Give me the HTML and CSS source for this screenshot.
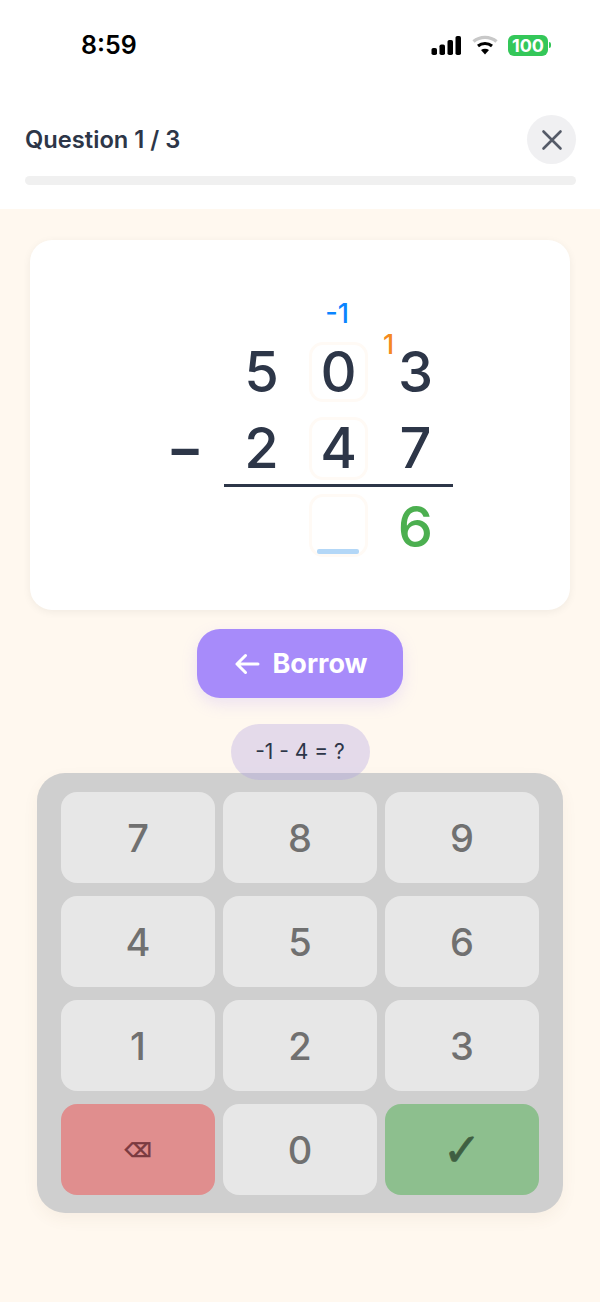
FILE: index.html
```html
<!DOCTYPE html>
<html lang="en">
  <head>
    <meta charset="UTF-8" />
    <meta name="viewport" content="width=device-width, initial-scale=1.0" />
    <title>Question 1 / 3</title>
    <link rel="stylesheet" href="styles.css">
  </head>
  <body>
    <header class="top">
      <div class="status-bar">
        <span class="clock">8:59</span>
        <div class="status-icons">
          <svg class="signal" width="31" height="20" viewBox="0 0 31 20">
            <rect x="0.5" y="13" width="5.5" height="7" rx="1.8" />
            <rect x="8.5" y="9.5" width="5.5" height="10.5" rx="1.8" />
            <rect x="16.5" y="5" width="5.5" height="15" rx="1.8" />
            <rect x="24.5" y="1" width="5.5" height="19" rx="1.8" />
          </svg>
          <svg class="wifi" width="26" height="20" viewBox="0 0 26 20">
            <path d="M1.5 6.5 C8 1 18 1 24.5 6.5" stroke="#c8c8c8" stroke-width="3.4" fill="none" />
            <path d="M6 11 C10 7.6 16 7.6 20 11" stroke="#000" stroke-width="3" fill="none" />
            <path d="M9 15 L13 19.5 L17 15 C14.6 13.2 11.4 13.2 9 15 Z" fill="#000" />
          </svg>
          <div class="battery">
            <span class="battery-body">100</span>
            <span class="battery-tip"></span>
          </div>
        </div>
      </div>
      <div class="question-row">
        <h1 class="question-title">Question 1 / 3</h1>
        <button class="close-btn">
          <svg width="22" height="22" viewBox="0 0 22 22">
            <path d="M2.5 2.5 L19.5 19.5 M19.5 2.5 L2.5 19.5" stroke="#555b68" stroke-width="2.6" stroke-linecap="round" />
          </svg>
        </button>
      </div>
      <div class="progress"></div>
    </header>

    <main class="content">
      <section class="sum-card">
        <div class="sum">
          <div class="sum-row">
            <span class="cell"></span>
            <span class="cell">5</span>
            <span class="cell boxed">0<span class="note-borrow">-1</span></span>
            <span class="cell">3<span class="note-carry">1</span></span>
          </div>
          <div class="sum-row">
            <span class="cell minus">−</span>
            <span class="cell">2</span>
            <span class="cell boxed">4</span>
            <span class="cell">7</span>
          </div>
          <div class="sum-line"></div>
          <div class="sum-row">
            <span class="cell"></span>
            <span class="cell"></span>
            <span class="cell boxed"><span class="cursor"></span></span>
            <span class="cell done">6</span>
          </div>
        </div>
      </section>

      <button class="borrow-btn">
        <svg width="26" height="22" viewBox="0 0 26 22">
          <path d="M24 11 H3 M11.5 2.5 L3 11 L11.5 19.5" stroke="#fff" stroke-width="3" fill="none" stroke-linecap="round" stroke-linejoin="round" />
        </svg>
        Borrow
      </button>

      <div class="hint">-1 - 4 = ?</div>

      <section class="keypad">
        <button class="key">7</button>
        <button class="key">8</button>
        <button class="key">9</button>
        <button class="key">4</button>
        <button class="key">5</button>
        <button class="key">6</button>
        <button class="key">1</button>
        <button class="key">2</button>
        <button class="key">3</button>
        <button class="key key-delete">⌫</button>
        <button class="key">0</button>
        <button class="key key-ok">✓</button>
      </section>
    </main>
  </body>
</html>
```

FILE: styles.css
```css
* {
  box-sizing: border-box;
}
body {
  margin: 0;
  width: 600px;
  height: 1302px;
  overflow: hidden;
  font-family: Inter, "Liberation Sans", sans-serif;
  background-color: #fff8ef;
  color: #2d3648;
}
button {
  font-family: inherit;
  border: none;
  padding: 0;
}

/* top part */
.top {
  height: 209px;
  padding: 0 24px 0 25px;
  background: white;
}
.status-bar {
  height: 90px;
  display: flex;
  justify-content: space-between;
  align-items: center;
  padding-left: 56px;
}
.clock {
  font-size: 25px;
  font-weight: 600;
  color: black;
}
.status-icons {
  display: flex;
  align-items: center;
  gap: 10px;
  margin-right: 25px;
}
.signal {
  fill: black;
}
.battery {
  display: flex;
  align-items: center;
  gap: 1px;
}
.battery-body {
  width: 40px;
  height: 21px;
  border-radius: 6px;
  background-color: #34c759;
  color: white;
  font-size: 18px;
  font-weight: 700;
  line-height: 21px;
  text-align: center;
}
.battery-tip {
  width: 2px;
  height: 6px;
  border-radius: 0 2px 2px 0;
  background-color: #34c759;
}
.question-row {
  display: flex;
  justify-content: space-between;
  align-items: center;
  height: 49px;
  margin-top: 25px;
}
.question-title {
  margin: 0;
  font-size: 23.7px;
  font-weight: 600;
}
.close-btn {
  width: 49px;
  height: 49px;
  border-radius: 50%;
  background-color: #f0f0f2;
  display: flex;
  align-items: center;
  justify-content: center;
}
.progress {
  height: 9px;
  margin-top: 12px;
  border-radius: 5px;
  background-color: #f0f0f0;
}

/* main part */
.content {
  display: flex;
  flex-direction: column;
  align-items: center;
  padding-top: 31px;
}
.sum-card {
  width: 540px;
  height: 370px;
  border-radius: 22px;
  background: white;
  box-shadow: 0 2px 8px rgba(0, 0, 0, 0.06);
  padding: 102px 0 0 124px;
}
.sum {
  width: 299px;
}
.sum-row {
  display: grid;
  grid-template-columns: 60px 59px 59px 59px;
  column-gap: 18px;
  height: 60px;
  margin-bottom: 15px;
  font-size: 56px;
  font-weight: 500;
  line-height: 60px;
  text-align: center;
}
.sum-row:nth-child(2) {
  margin-bottom: 7px;
  line-height: 63px;
}
.cell {
  position: relative;
  display: block;
  border-radius: 14px;
}
.boxed {
  border: 3px solid #fffaf5;
  line-height: 54px;
}
.sum-row:nth-child(2) .boxed {
  line-height: 57px;
}
.minus {
  font-weight: 600;
  padding-left: 2px;
}
.note-borrow {
  position: absolute;
  top: -46px;
  left: -3px;
  right: 0;
  font-size: 27px;
  font-weight: 500;
  line-height: 30px;
  color: #0a84ff;
}
.note-carry {
  position: absolute;
  top: -12px;
  left: -3px;
  font-size: 27px;
  font-weight: 500;
  line-height: 30px;
  color: #f58a1f;
}
.sum-line {
  height: 3px;
  margin: 0 0 7px 70px;
  background-color: #2d3648;
}
.cursor {
  position: absolute;
  left: 5px;
  bottom: 0;
  width: 42px;
  height: 5px;
  border-radius: 2px;
  background-color: #b3d7f7;
}
.done {
  padding-top: 3px;
  color: #4caf50;
}
.borrow-btn {
  width: 206px;
  height: 69px;
  margin-top: 19px;
  border-radius: 23px;
  background-color: #a78bfa;
  color: white;
  font-size: 27px;
  font-weight: 700;
  box-shadow: 0 6px 16px rgba(167, 139, 250, 0.2);
  display: flex;
  align-items: center;
  justify-content: center;
  gap: 12px;
  padding-left: 2px;
}
.hint {
  position: relative;
  z-index: 2;
  width: 139px;
  height: 56px;
  margin-top: 26px;
  border-radius: 28px;
  background-color: rgba(175, 160, 225, 0.34);
  font-size: 21px;
  line-height: 56px;
  text-align: center;
}
.keypad {
  width: 526px;
  height: 440px;
  margin-top: -7px;
  padding: 19px 24px 18px;
  border-radius: 28px;
  background-color: #cfcfcf;
  box-shadow: 0 6px 16px rgba(120, 90, 50, 0.06);
  display: grid;
  grid-template-columns: repeat(3, 1fr);
  grid-template-rows: repeat(4, 1fr);
  column-gap: 8px;
  row-gap: 13px;
}
.key {
  border-radius: 16px;
  background-color: #e7e7e7;
  color: #707070;
  font-size: 38px;
  font-weight: 450;
}
.key-delete {
  background-color: #e08e8e;
  color: #7a3a40;
  font-family: "DejaVu Sans", sans-serif;
  font-size: 19px;
  font-weight: 700;
  -webkit-text-stroke: 0.6px #7a3a40;
}
.key-ok {
  background-color: #8dbf8e;
  color: #3f5f42;
  font-family: "DejaVu Sans", sans-serif;
  font-size: 46px;
  font-weight: 700;
  -webkit-text-stroke: 0.8px #3f5f42;
}
```
